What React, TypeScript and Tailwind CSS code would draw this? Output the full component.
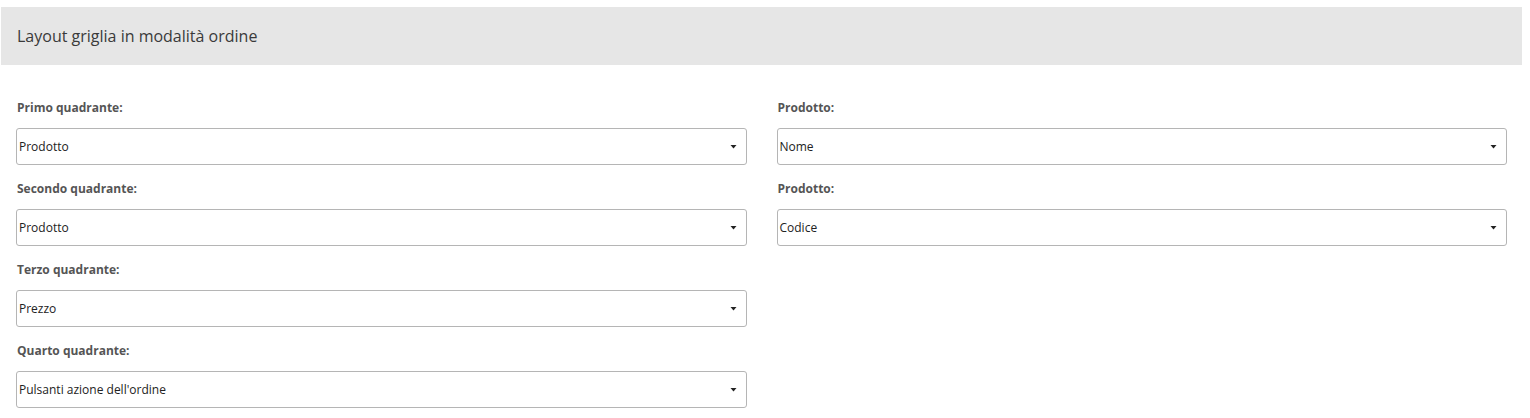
const left = [
  { label: 'Primo quadrante:', value: 'Prodotto' },
  { label: 'Secondo quadrante:', value: 'Prodotto' },
  { label: 'Terzo quadrante:', value: 'Prezzo' },
  { label: 'Quarto quadrante:', value: "Pulsanti azione dell'ordine" },
];

const right = [
  { label: 'Prodotto:', value: 'Nome' },
  { label: 'Prodotto:', value: 'Codice' },
];

function Field({ label, value }: { label: string; value: string }) {
  return (
    <div className="flex flex-col">
      <div className="flex h-[20px] items-center pl-px text-[12px] font-bold text-[#555]">
        {label}
      </div>
      <div className="mt-[10px] flex h-[37px] items-center justify-between rounded-[3px] border border-[#b5b5b5] bg-white pr-[9px] pl-[2px] text-[12px] text-[#222]">
        <span>{value}</span>
        <svg width="7" height="4" viewBox="0 0 7 4">
          <path d="M0.5 0h6L3.5 3.5z" fill="#222" />
        </svg>
      </div>
    </div>
  );
}

export default function App() {
  return (
    <div className="bg-white pt-[7px] pr-[8px] pl-px font-['Open_Sans',sans-serif]">
      <div className="flex h-[58px] items-center bg-[#e6e6e6] px-4 text-[16px] text-[#3a3a3a]">
        Layout griglia in modalità ordine
      </div>
      <div className="grid grid-cols-2 gap-x-[30px] px-[15px] pt-[33px]">
        <div className="flex flex-col gap-[14px]">
          {left.map((f, i) => (
            <Field key={i} {...f} />
          ))}
        </div>
        <div className="flex flex-col gap-[14px]">
          {right.map((f, i) => (
            <Field key={i} {...f} />
          ))}
        </div>
      </div>
    </div>
  );
}
